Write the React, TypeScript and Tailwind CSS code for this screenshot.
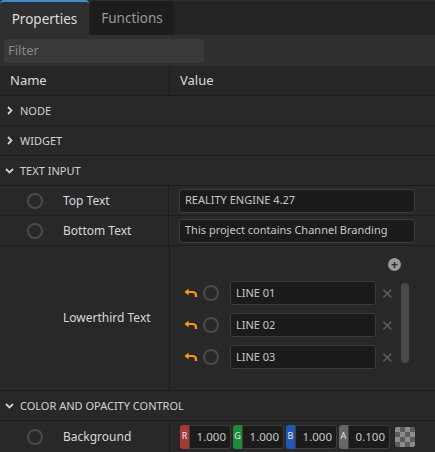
import React from "react";

const font = { fontFamily: '"Segoe UI", "Noto Sans", "Open Sans", sans-serif' };

function Chevron({ open }: { open: boolean }) {
  return (
    <svg width="9" height="9" viewBox="0 0 9 9" className="shrink-0">
      {open ? (
        <path d="M1 3 L4.5 6.5 L8 3" fill="none" stroke="#d0d0d0" strokeWidth="1.8" />
      ) : (
        <path d="M3 1 L6.5 4.5 L3 8" fill="none" stroke="#d0d0d0" strokeWidth="1.8" />
      )}
    </svg>
  );
}

function Circle() {
  return <div className="w-4 h-4 rounded-full border-2 border-[#4a4a4a] shrink-0" />;
}

function Section({ label, open }: { label: string; open: boolean }) {
  return (
    <div className="h-[30px] flex items-center gap-[6px] pl-[5px] border-b border-[#1c1c1c] bg-[#282828] text-[11px] text-[#d2d2d2] shrink-0">
      <Chevron open={open} />
      <span className="pt-px">{label}</span>
    </div>
  );
}

function PropRow({ label, value }: { label: string; value: string }) {
  return (
    <div className="h-[30px] flex border-b border-[#1c1c1c] bg-[#282828] shrink-0">
      <div className="w-[170px] flex items-center pl-[27px] gap-5 border-r border-[#1c1c1c]">
        <Circle />
        <span className="text-[12px] text-[#d4d8dc]">{label}</span>
      </div>
      <div className="flex-1 flex items-center pl-[10px] pr-5">
        <div className="w-[236px] h-6 rounded-[3px] bg-[#1b1b1b] border border-[#3c3c3c] flex items-center px-[5px] text-[11px] text-[#c4c8cc] whitespace-nowrap overflow-hidden">
          {value}
        </div>
      </div>
    </div>
  );
}

function Undo() {
  return (
    <svg width="14" height="10" viewBox="0 0 14 10" className="shrink-0">
      <path d="M3 4 H8.5 Q12 4 12 7.5 V9" fill="none" stroke="#f29a1c" strokeWidth="2.2" />
      <path d="M0.5 4 L4.5 0.5 V7.5 Z" fill="#f29a1c" />
    </svg>
  );
}

function LineItem({ text }: { text: string }) {
  return (
    <div className="flex items-center h-6">
      <Undo />
      <div className="ml-[5px]">
        <Circle />
      </div>
      <div className="ml-[11px] w-[146px] h-6 rounded-[3px] bg-[#1b1b1b] border border-[#3c3c3c] flex items-center px-[5px] text-[11px] text-[#c4c8cc]">
        {text}
      </div>
      <span className="ml-[5px] w-[10px] text-[#5c5c5c] text-[15px] leading-none">✕</span>
    </div>
  );
}

function ColorField({ letter, color, value }: { letter: string; color: string; value: string }) {
  return (
    <div className="flex h-6">
      <div className={`w-[9px] rounded-l-[3px] ${color} text-[9px] text-[#e8e8e8] flex justify-center pt-[4px]`}>
        {letter}
      </div>
      <div className="w-[42px] bg-[#1b1b1b] border border-[#3c3c3c] rounded-r-[3px] flex items-center justify-end pr-[4px] text-[11.5px] text-[#c4c8cc]">
        {value}
      </div>
    </div>
  );
}

function Checker() {
  const cells = [];
  for (let r = 0; r < 4; r++) {
    for (let c = 0; c < 4; c++) {
      cells.push(
        <div key={`${r}-${c}`} className={(r + c) % 2 === 0 ? "bg-[#8c8c8c]" : "bg-[#5c5c5c]"} />
      );
    }
  }
  return <div className="ml-[3px] w-5 h-5 grid grid-cols-4 grid-rows-4 rounded-[2px] overflow-hidden">{cells}</div>;
}

export default function App() {
  return (
    <div style={font} className="w-[435px] h-[452px] overflow-hidden bg-[#282828] flex flex-col">
      <div className="h-[35px] flex bg-[#242424] border-t border-[#2e2e2e] shrink-0">
        <div className="w-[89px] bg-[#2f2f2f] border-t-2 border-[#3b8ed0] rounded-t-[4px] -mt-px flex items-center justify-center pt-px text-[13.5px] text-[#dcdcdc]">
          Properties
        </div>
        <div className="ml-px w-[84px] bg-[#1d1d1d] rounded-t-[4px] flex items-center justify-center pt-px text-[13.5px] text-[#9a9a9a]">
          Functions
        </div>
      </div>
      <div className="h-[31px] bg-[#2f2f2f] flex items-center px-1 shrink-0">
        <div className="w-[200px] h-6 rounded-[3px] bg-[#393939] flex items-center px-1 text-[13px] text-[#8a8a8a]">
          Filter
        </div>
      </div>
      <div className="h-[30px] flex bg-[#262626] border-b border-[#1c1c1c] text-[13px] text-[#dcdcdc] shrink-0">
        <div className="w-[170px] flex items-center pl-[10px] border-r border-[#1c1c1c]">Name</div>
        <div className="flex-1 flex items-center pl-[10px]">Value</div>
      </div>
      <Section label="NODE" open={false} />
      <Section label="WIDGET" open={false} />
      <Section label="TEXT INPUT" open={true} />
      <PropRow label="Top Text" value="REALITY ENGINE 4.27" />
      <PropRow label="Bottom Text" value="This project contains Channel Branding" />
      <div className="h-[145px] flex border-b border-[#1c1c1c] bg-[#282828] shrink-0">
        <div className="w-[170px] flex items-center pl-[63px] border-r border-[#1c1c1c]">
          <span className="text-[12px] text-[#d4d8dc]">Lowerthird Text</span>
        </div>
        <div className="flex-1 flex flex-col pl-[14px] pt-[12px]">
          <div className="flex justify-end pr-[34px] h-[13px]">
            <div className="w-[13px] h-[13px] rounded-full bg-[#9a9a9a] flex items-center justify-center text-[#262626] text-[12px] font-bold leading-none">
              +
            </div>
          </div>
          <div className="flex mt-[10px]">
            <div className="flex flex-col gap-2">
              <LineItem text="LINE 01" />
              <LineItem text="LINE 02" />
              <LineItem text="LINE 03" />
            </div>
            <div className="ml-[10px] mt-[2px] w-2 h-20 rounded-full bg-[#4a4a4a]" />
          </div>
        </div>
      </div>
      <Section label="COLOR AND OPACITY CONTROL" open={true} />
      <div className="h-[31px] flex bg-[#282828] shrink-0">
        <div className="w-[170px] flex items-center pl-[27px] gap-5 border-r border-[#1c1c1c]">
          <Circle />
          <span className="text-[12px] text-[#d4d8dc]">Background</span>
        </div>
        <div className="flex-1 flex items-center pl-[10px] gap-[2px]">
          <ColorField letter="R" color="bg-[#a23a3a]" value="1.000" />
          <ColorField letter="G" color="bg-[#1f8a3c]" value="1.000" />
          <ColorField letter="B" color="bg-[#2456b8]" value="1.000" />
          <ColorField letter="A" color="bg-[#666666]" value="0.100" />
          <Checker />
        </div>
      </div>
    </div>
  );
}
